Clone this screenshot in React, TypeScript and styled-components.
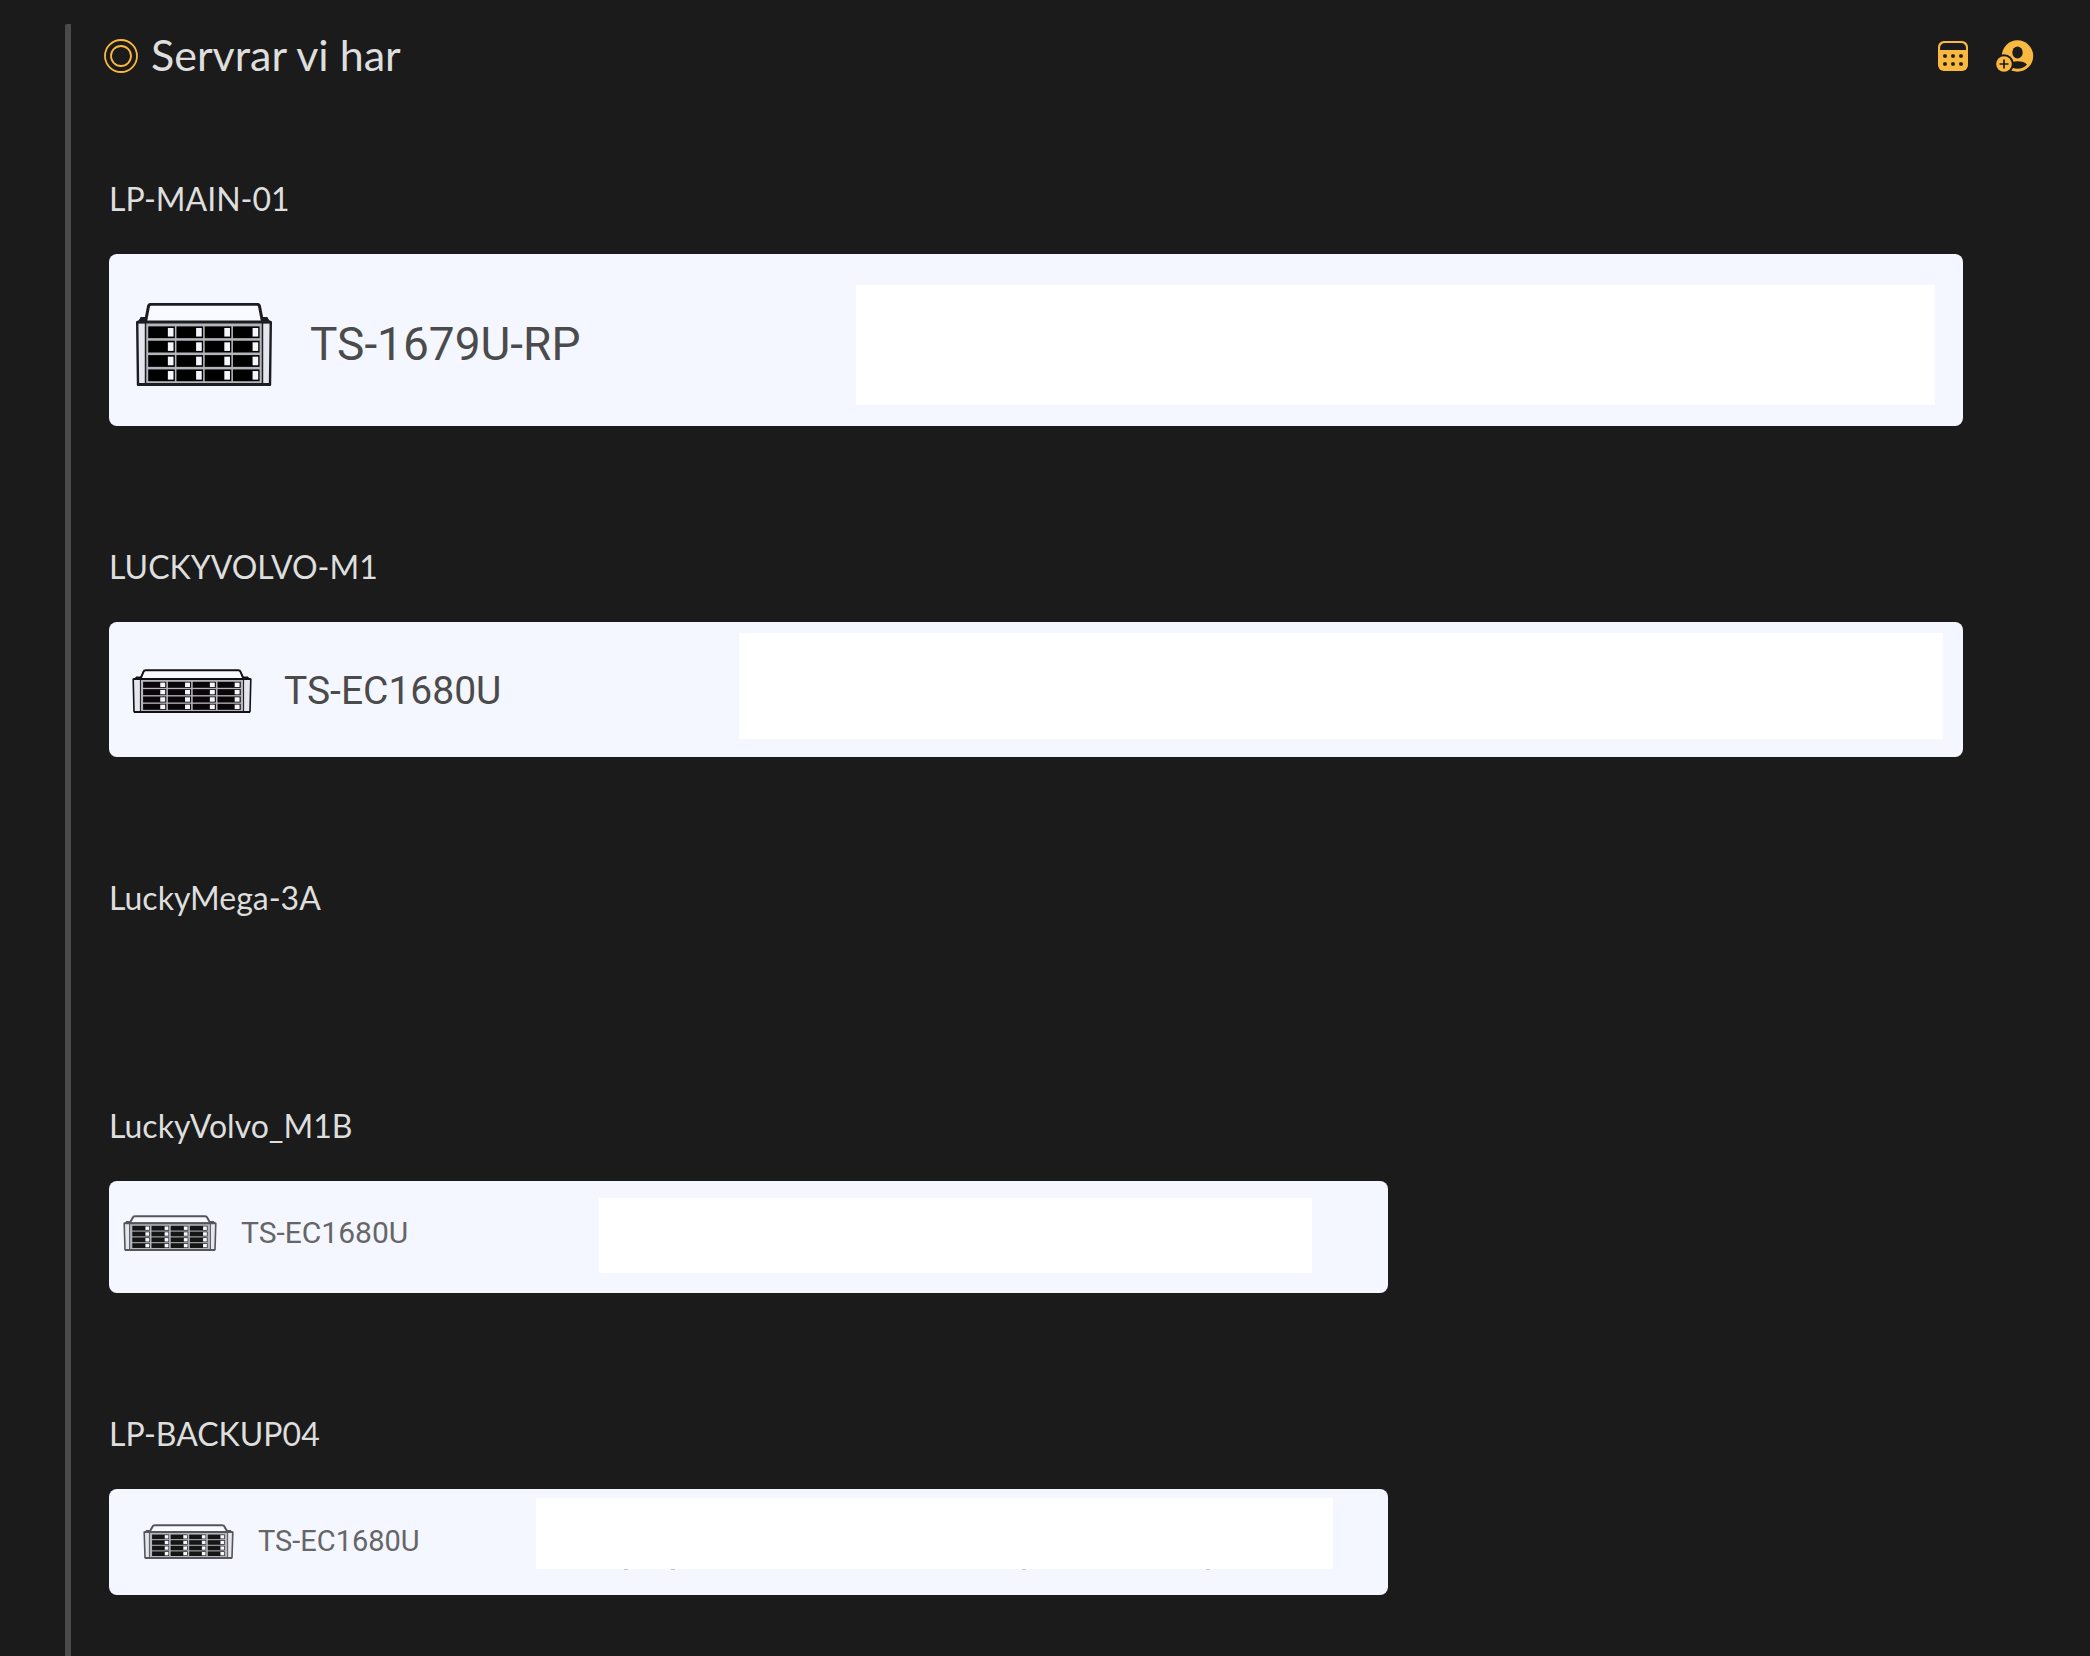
import React from 'react';
import styled, { createGlobalStyle } from 'styled-components';

const GlobalStyle = createGlobalStyle`
  * { box-sizing: border-box; }
  body { margin: 0; background: #1b1b1b; font-family: Lato, "Open Sans", sans-serif; color: #dedede; }
`;

const Page = styled.main`
  min-height: 100vh;
  padding: 24px 56px 0 65px;
  display: flex;
`;

const Thread = styled.article`
  flex: 1;
  display: flex;
  flex-direction: column;
  border-left: 6px solid #4a4a4a;
  border-top-left-radius: 2px;
  padding-left: 33px;
`;

const Header = styled.header`
  display: flex;
  align-items: center;
  gap: 13px;
  height: 64px;
`;

const Title = styled.h1`
  flex: 1;
  margin: 0;
  padding-bottom: 2px;
  font-size: 43px;
  font-weight: 400;
  line-height: 62px;
`;

const Actions = styled.div`
  display: flex;
  align-items: center;
  gap: 28px;
`;

const IconButton = styled.button`
  display: flex;
  padding: 0;
  border: 0;
  background: none;
  color: #f9b940;
  cursor: pointer;
`;

const List = styled.div`
  display: flex;
  flex-direction: column;
  gap: 118px;
  padding: 88px 71px 60px 5px;
`;

const Server = styled.section<{ $minHeight?: number }>`
  display: flex;
  flex-direction: column;
  gap: 32px;
  min-height: ${p => p.$minHeight ?? 0}px;
`;

const Name = styled.h2`
  margin: 0;
  font-size: 32px;
  font-weight: 400;
  line-height: 46px;
`;

const Card = styled.div<{ $width: string; $height: number; $pad: string; $gap: number }>`
  display: flex;
  align-items: center;
  gap: ${p => p.$gap}px;
  width: ${p => p.$width};
  height: ${p => p.$height}px;
  padding: ${p => p.$pad};
  border-radius: 8px;
  background: #f4f7ff;
`;

const Model = styled.span<{ $size: number; $color: string }>`
  flex: 1;
  font-family: Roboto, sans-serif;
  font-size: ${p => p.$size}px;
  line-height: 48px;
  color: ${p => p.$color};
`;

const Blank = styled.div<{ $share: string; $top: number; $bottom: number }>`
  position: relative;
  flex-shrink: 0;
  align-self: stretch;
  width: ${p => p.$share};
  margin: ${p => p.$top}px 0 ${p => p.$bottom}px;
  background: #ffffff;
`;

const Speck = styled.i<{ $left: string }>`
  position: absolute;
  top: 100%;
  left: ${p => p.$left};
  width: 4px;
  height: 1px;
  background: #c4c4c4;
`;

const Rings = () => (
  <svg width="34" height="34" viewBox="0 0 34 34" fill="none" stroke="#f9b940" strokeWidth="1.8" aria-hidden="true">
    <circle cx="17" cy="17" r="16" />
    <circle cx="17" cy="17" r="10" />
  </svg>
);

const Calendar = () => (
  <svg width="30" height="30" viewBox="0 0 30 30" aria-hidden="true">
    <rect width="30" height="30" rx="6" fill="currentColor" />
    <path d="M2 9V7.500Q2 2 7.500 2H22.500Q28 2 28 7.500V9Z" fill="#1b1b1b" />
    {[15, 23].map(y => [7, 15, 23].map(x => (
      <rect key={`${x}-${y}`} x={x - 1.8} y={y - 1.8} width="3.6" height="3.6" rx="1.2" fill="#1b1b1b" />
    )))}
  </svg>
);

const AddPerson = () => (
  <svg width="38" height="34" viewBox="0 0 38 34" aria-hidden="true">
    <circle cx="21.5" cy="17" r="15.7" fill="currentColor" />
    <ellipse cx="21.5" cy="13.5" rx="5.2" ry="6" fill="#1b1b1b" />
    <path d="M12 26Q15 22.300 21.500 22.300Q28 22.300 31 25.500Q27 29.800 21.500 29.800Q16 29.800 12 26Z" fill="#1b1b1b" />
    <circle cx="8" cy="25" r="9.800" fill="#1b1b1b" />
    <circle cx="8" cy="25" r="7.800" fill="currentColor" />
    <path d="M8 20.500V29.500M3.500 25H12.500" stroke="#1b1b1b" strokeWidth="1.700" />
  </svg>
);

type RackProps = { width: number; height: number; line: string; bay: string; frame: number };

/* Front view of a sixteen-bay rack unit; the lid takes about a fifth of its height. */
const Rack = ({ width: w, height: h, line, bay, frame }: RackProps) => {
  const lid = h * 0.23;
  const ear = w * 0.07;
  const left = ear + 2;
  const top = lid + frame;
  const cw = (w - 2 * left) / 4;
  const ch = (h - top - frame - 0.5) / 4;
  const gap = Math.max(1, ch * 0.18);
  const cells = [0, 1, 2, 3];
  return (
    <svg width={w} height={h} viewBox={`0 0 ${w} ${h}`} role="img" aria-label="NAS">
      <path d={`M${ear} ${lid}L${ear + 3} 3Q${ear + 3.5} 1.3 ${ear + 5.5} 1.3H${w - ear - 5.5}Q${w - ear - 3.5} 1.3 ${w - ear - 3} 3L${w - ear} ${lid}`} fill="#f8faff" stroke={line} strokeWidth={frame} />
      <path d={`M1 ${lid + 1}L${ear * 0.5} ${lid - h * 0.06}H${ear + 1}V${lid + 2}ZM${w - 1} ${lid + 1}L${w - ear * 0.5} ${lid - h * 0.06}H${w - ear - 1}V${lid + 2}Z`} fill={line} />
      <path d={`M1.2 ${lid}H${w - 1.2}L${w - 2} ${h - 1.2}H2Z`} fill="#e4e7ed" stroke={line} strokeWidth={frame * 0.8} strokeLinejoin="round" />
      <rect x={ear} y={lid} width={w - 2 * ear} height={h - lid - 1} fill="#b4b6bc" stroke={line} strokeWidth={frame / 2} />
      {cells.map(r => cells.map(c => (
        <g key={`${r}-${c}`}>
          <rect x={left + c * cw + 0.7} y={top + r * ch + gap / 2} width={cw - 1.6} height={ch - gap} fill={bay} />
          <rect x={left + (c + 0.72) * cw} y={top + r * ch + ch * 0.2} width={cw * 0.2} height={ch * 0.6} fill="#f4f6fb" />
        </g>
      )))}
      <path d={`M1.5 ${lid}H${w - 1.5}M2 ${h - frame / 2}H${w - 2}`} stroke={line} strokeWidth={frame} />
    </svg>
  );
};

const specks = ['11%', '17%', '61%', '84%'];

export default function App() {
  return (
    <>
      <GlobalStyle />
      <Page>
        <Thread>
          <Header>
            <Rings />
            <Title>Servrar vi har</Title>
            <Actions>
              <IconButton aria-label="Kalender"><Calendar /></IconButton>
              <IconButton aria-label="Lägg till person"><AddPerson /></IconButton>
            </Actions>
          </Header>
          <List>
            <Server>
              <Name>LP-MAIN-01</Name>
              <Card $width="100%" $height={172} $pad="8px 28px 0 27px" $gap={38}>
                <Rack width={136} height={83} line="#1c1d20" bay="#000000" frame={3} />
                <Model $size={46} $color="#4b4b4b">TS-1679U-RP</Model>
                <Blank $share="60%" $top={23} $bottom={21} />
              </Card>
            </Server>
            <Server>
              <Name>LUCKYVOLVO-M1</Name>
              <Card $width="100%" $height={135} $pad="3px 20px 0 23px" $gap={32}>
                <Rack width={120} height={44} line="#151015" bay="#0a0508" frame={2} />
                <Model $size={39} $color="#4b4b4b">TS-EC1680U</Model>
                <Blank $share="66.500%" $top={8} $bottom={18} />
              </Card>
            </Server>
            <Server $minHeight={110}>
              <Name>LuckyMega-3A</Name>
            </Server>
            <Server>
              <Name>LuckyVolvo_M1B</Name>
              <Card $width="69%" $height={112} $pad="0 76px 8px 14px" $gap={24}>
                <Rack width={94} height={36} line="#55565a" bay="#151515" frame={2} />
                <Model $size={30} $color="#666666">TS-EC1680U</Model>
                <Blank $share="60%" $top={17} $bottom={12} />
              </Card>
            </Server>
            <Server>
              <Name>LP-BACKUP04</Name>
              <Card $width="69%" $height={106} $pad="0 55px 2px 34px" $gap={24}>
                <Rack width={91} height={35} line="#55565a" bay="#151515" frame={2} />
                <Model $size={29} $color="#666666">TS-EC1680U</Model>
                <Blank $share="67%" $top={9} $bottom={24}>
                  {specks.map(left => <Speck key={left} $left={left} />)}
                </Blank>
              </Card>
            </Server>
          </List>
        </Thread>
      </Page>
    </>
  );
}
